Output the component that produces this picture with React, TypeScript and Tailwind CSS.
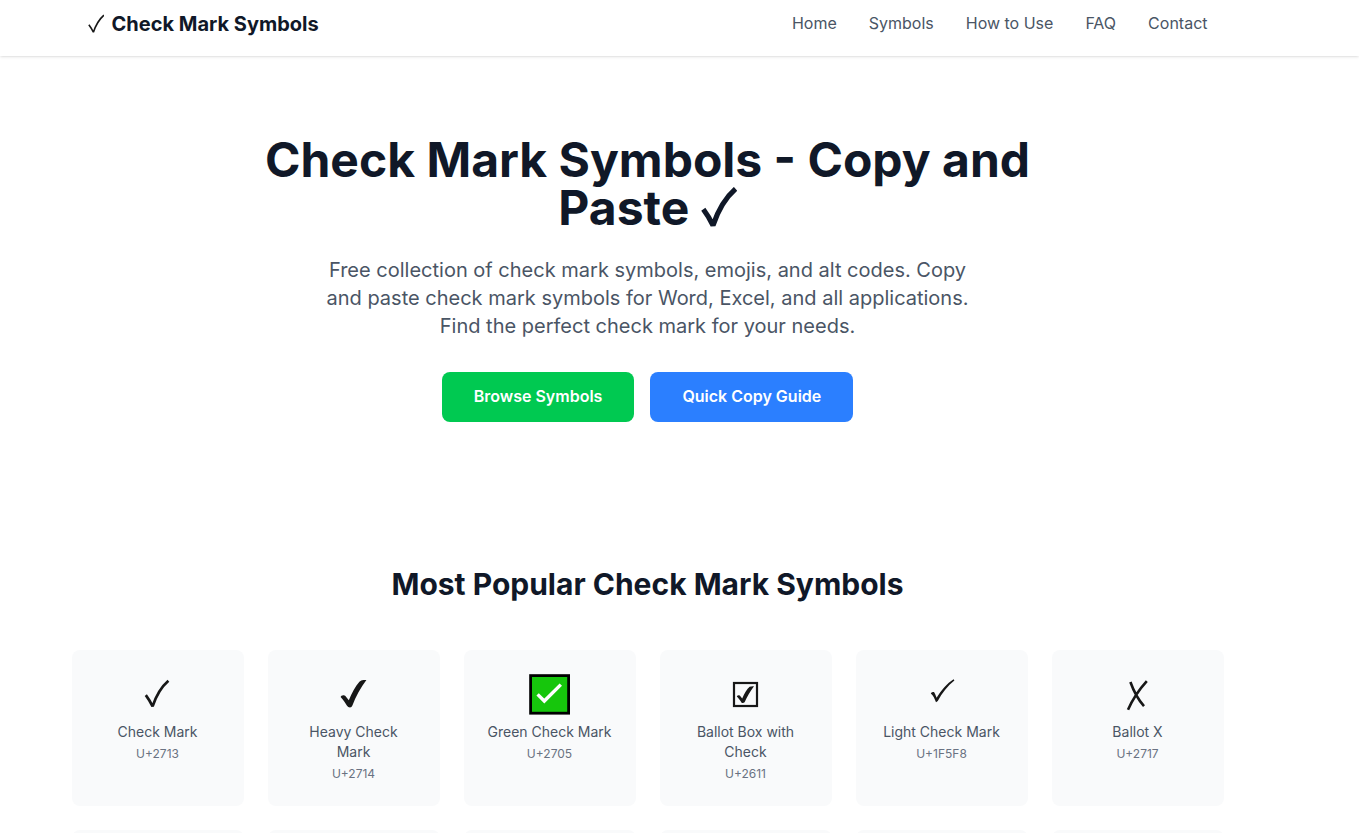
import React from "react";

type IconProps = { className?: string };

const navLinks = ["Home", "Symbols", "How to Use", "FAQ", "Contact"];

const CheckPath = ({ width }: { width: number }) => (
  <path
    d="M7.8 21.1C10.4 24.6 12.8 28.6 14.6 32.4C18 22.2 23 13.2 30.4 6.8"
    fill="none"
    stroke="currentColor"
    strokeWidth={width}
    strokeLinejoin="bevel"
  />
);

const CheckIcon = ({ className }: IconProps) => (
  <svg viewBox="0 0 40 40" className={className} aria-hidden="true">
    <CheckPath width={2.7} />
  </svg>
);

const HeavyCheckIcon = ({ className }: IconProps) => (
  <svg viewBox="0 0 40 40" className={className} aria-hidden="true">
    <path
      fill="currentColor"
      d="M6.6 23Q7 21 9.8 21.2Q11.2 21.4 12.4 23.2L14.8 26.2C17.8 19 21.4 12.4 25.4 7.8Q27 6 29.4 6H32.4C26.6 13.6 21.8 22.4 18.4 31.4Q17.6 33.4 16 33.4Q14 33.4 13 31.8C11.4 29 9.4 25.8 6.6 23Z"
    />
  </svg>
);

const GreenCheckIcon = ({ className }: IconProps) => (
  <svg viewBox="0 0 40 40" className={className} aria-hidden="true">
    <rect x="0.6" y="1.6" width="38" height="37.6" fill="#16c60c" stroke="#000" strokeWidth="2.8" />
    <path d="M7.6 20.4L14.3 27L30.8 10.6" fill="none" stroke="#fff" strokeWidth="3.4" />
  </svg>
);

const BallotCheckIcon = ({ className }: IconProps) => (
  <svg viewBox="0 0 40 40" className={className} aria-hidden="true">
    <rect x="8" y="9" width="23" height="23" fill="none" stroke="currentColor" strokeWidth="2.2" />
    <path
      fill="currentColor"
      d="M10.8 22.4Q11.6 20.8 13.8 21.4L16.2 24.6C18.4 19.4 21 15 23.6 12.8Q25.2 12 28 12.2C24 17.4 21 23 18.6 28.2Q17.4 29.4 15.6 28.8C14.2 26.2 12.8 24.2 10.8 22.4Z"
    />
  </svg>
);

const LightCheckIcon = ({ className }: IconProps) => (
  <svg viewBox="0 0 40 40" className={className} aria-hidden="true">
    <path
      fill="currentColor"
      d="M8.8 19.4Q9.8 17.6 12 18Q13.4 20 14.6 23.8C19.2 16 25 9.4 31.6 5.2L32.4 6.4C25.6 11.8 20.2 18.6 15.8 27L14 28.2C12.6 24.6 11.4 21.4 8.8 19.4Z"
    />
  </svg>
);

const BallotXIcon = ({ className }: IconProps) => (
  <svg viewBox="0 0 40 40" className={className} aria-hidden="true">
    <path
      d="M12.4 8C15.4 16.4 20 25.4 26 32.2M28.8 7.2C21.2 15.6 14.6 25.4 10 35.8"
      fill="none"
      stroke="currentColor"
      strokeWidth="2.6"
    />
  </svg>
);

const symbols = [
  { name: "Check Mark", code: "U+2713", Icon: CheckIcon },
  { name: "Heavy Check Mark", code: "U+2714", Icon: HeavyCheckIcon },
  { name: "Green Check Mark", code: "U+2705", Icon: GreenCheckIcon },
  { name: "Ballot Box with Check", code: "U+2611", Icon: BallotCheckIcon },
  { name: "Light Check Mark", code: "U+1F5F8", Icon: LightCheckIcon },
  { name: "Ballot X", code: "U+2717", Icon: BallotXIcon },
];

const App = () => {
  return (
    <div className="h-screen overflow-hidden bg-white font-['Inter',sans-serif] text-[#171717]">
      {/* header */}
      <header className="bg-white pr-16 shadow-sm">
        <div className="max-w-6xl mx-auto px-4 pt-2 pb-4 flex items-center justify-between">
          <a href="#" className="flex items-center gap-2">
            <svg viewBox="6.5 6 24 28" className="w-4 h-5" aria-hidden="true">
              <CheckPath width={2.4} />
            </svg>
            <span className="text-xl leading-8 font-bold text-gray-900">
              Check Mark Symbols
            </span>
          </a>
          <nav className="flex gap-8 pb-0.5">
            {navLinks.map((link) => (
              <a key={link} href="#" className="text-gray-600 hover:text-gray-900">
                {link}
              </a>
            ))}
          </nav>
        </div>
      </header>

      <main className="pr-16">
        {/* hero */}
        <section className="py-20 text-center">
          <div className="max-w-4xl mx-auto px-4">
            <h1 className="text-5xl leading-12 font-bold text-gray-900 mb-6">
              Check Mark Symbols - Copy and Paste{" "}
              <svg viewBox="6.2 5.5 25.2 28" className="inline-block w-9 h-10 align-[-2px]" aria-hidden="true">
                <CheckPath width={3.6} />
              </svg>
            </h1>
            <p className="text-xl text-gray-600 max-w-2xl mx-auto mb-8">
              Free collection of check mark symbols, emojis, and alt codes. Copy
              and paste check mark symbols for Word, Excel, and all
              applications. Find the perfect check mark for your needs.
            </p>
            <div className="flex justify-center gap-4">
              <button className="bg-green-500 text-white font-semibold px-8 pb-0.5 h-[50px] rounded-lg hover:bg-green-600">
                Browse Symbols
              </button>
              <button className="bg-blue-500 text-white font-semibold px-8 pb-0.5 h-[50px] rounded-lg hover:bg-blue-600">
                Quick Copy Guide
              </button>
            </div>
          </div>
        </section>

        {/* popular symbols */}
        <section className="py-16">
          <div className="max-w-6xl mx-auto">
            <h2 className="text-3xl font-bold text-center text-gray-900 mb-12">
              Most Popular Check Mark Symbols
            </h2>
            <div className="grid grid-cols-6 gap-6">
              {symbols.map(({ name, code, Icon }) => (
                <div key={code} className="bg-gray-50 rounded-lg p-6 text-center">
                  <Icon className="w-10 h-10 mx-auto mb-2 overflow-visible" />
                  <div className="text-sm text-gray-600">{name}</div>
                  <div className="text-xs text-gray-500 mt-1">{code}</div>
                </div>
              ))}
              {symbols.map(({ code }) => (
                <div key={`next-${code}`} className="bg-gray-50 rounded-lg p-6" />
              ))}
            </div>
          </div>
        </section>
      </main>
    </div>
  );
};

export default App;
